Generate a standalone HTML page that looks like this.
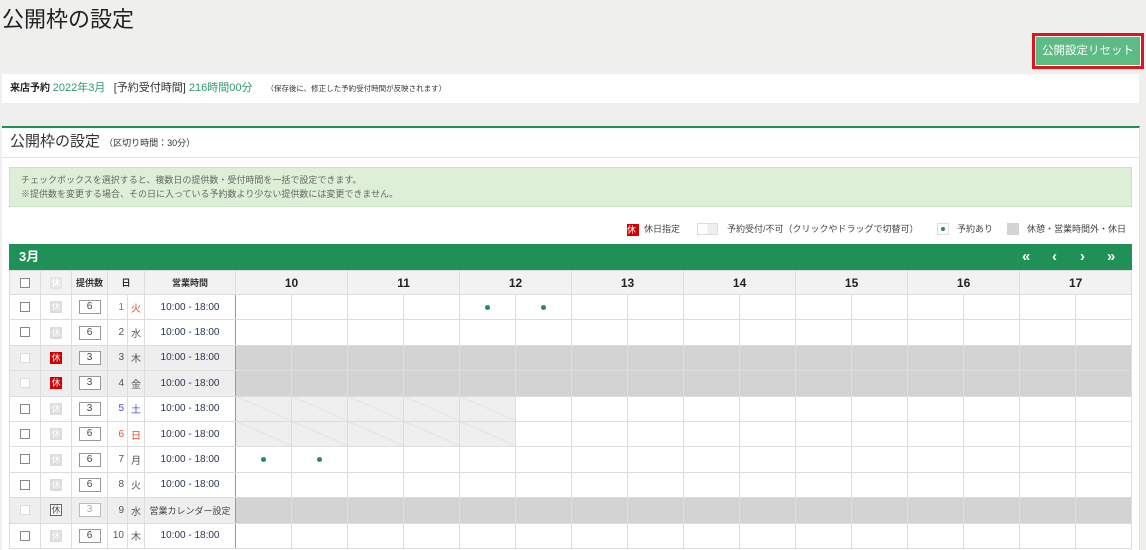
<!DOCTYPE html>
<html><head><meta charset="utf-8"><style>
*{box-sizing:border-box;margin:0;padding:0}
body{width:1146px;height:550px;overflow:hidden;background:#eff0ed;font-family:"Liberation Sans","Noto Sans CJK JP",sans-serif;color:#333;position:relative}
.abs{position:absolute}
h1{position:absolute;left:2px;top:2px;font-size:22px;font-weight:normal;color:#222}
.btn{left:1032px;top:33px;width:112px;height:36px;border:3px solid #e0141e;background:#fff}
.btn div{position:absolute;left:1px;top:1px;right:1px;bottom:1px;background:#5dbb84;color:#fff;font-size:11.5px;text-align:center;line-height:28px}
.info{left:2px;top:74px;width:1137px;height:29px;background:#fff;font-size:10px;line-height:29px;padding-left:8px;white-space:nowrap}
.g{color:#2e9a6b}
.panel{left:2px;top:126px;width:1138px;height:424px;background:#fff;border-top:2px solid #1f9157;border-right:1px solid #e4e4e4}
.ph{position:absolute;left:0;top:0;width:100%;height:30px;border-bottom:1px solid #e4e4e4;font-size:15px;line-height:27px;padding-left:8px}
.note{left:9px;top:167px;width:1123px;height:40px;background:#deefd8;border:1px solid #c9e4c0;font-size:9px;color:#666;line-height:14px;padding:5px 0 0 11px}
.leg{top:222px;font-size:9px;color:#444;line-height:14px}
.bar{left:9px;top:244px;width:1123px;height:26px;background:#1f9157;color:#fff;font-weight:bold;font-size:13px;line-height:26px;padding-left:10px}
.nav{position:absolute;top:0;color:#fff;font-size:15px;font-weight:bold}
table{position:absolute;left:9px;top:270px;border-collapse:collapse;table-layout:fixed;width:1123px;font-size:10px}
td,th{border:1px solid #ddd;height:25.4px;text-align:center;padding:0;overflow:hidden;white-space:nowrap}
th{background:#f2f2f2;height:24px;font-size:9px}
th.h{font-size:12px;color:#222}
.cb{display:inline-block;width:10px;height:10px;border:1px solid #888;background:#fff;vertical-align:middle}
.cbd{border-color:#ddd}
.k{display:inline-block;width:12px;height:12px;background:#ddd;color:#fff;font-size:9px;line-height:12px;vertical-align:middle}
.kr{background:#d40000}
.ko{background:#fff;border:1px solid #666;color:#555;line-height:10px}
.n{display:inline-block;width:22px;height:14px;border:1px solid #999;line-height:12px;font-size:10px;vertical-align:middle;background:#fff;color:#444}
.ng{color:#aaa;border-color:#bbb}
tr.x td.l{background:#eee}
td.t{border-right:1px solid #999}
td.b{border-left:1px solid #999}
tr.x td.s{background:#d3d3d3}
td.hz{background:#efefef;background-image:linear-gradient(to bottom left,transparent 49%,#ddd 50%,transparent 52%)}
.wd{color:#555}
.red{color:#e84a2a}.blu{color:#4a4ae0}
.dot{display:inline-block;width:5px;height:5px;border-radius:50%;background:#1f9157}
.tm{color:#2a3550}
</style></head><body>
<h1>公開枠の設定</h1>
<div class="abs btn"><div>公開設定リセット</div></div>
<div class="abs info"><b style="color:#222">来店予約</b> <span class="g" style="font-size:11px">2022年3月</span>&nbsp;&nbsp;&nbsp;<span style="font-size:11px">[予約受付時間] <span class="g">216時間00分</span></span>&nbsp;&nbsp;&nbsp;&nbsp;&nbsp;<span style="font-size:7.5px">（保存後に、修正した予約受付時間が反映されます）</span></div>
<div class="abs panel"><div class="ph">公開枠の設定 <span style="font-size:9px">（区切り時間：30分）</span></div></div>
<div class="abs note">チェックボックスを選択すると、複数日の提供数・受付時間を一括で設定できます。<br>※提供数を変更する場合、その日に入っている予約数より少ない提供数には変更できません。</div>
<div class="abs leg" style="left:627px"><span class="k kr">休</span>&nbsp; 休日指定</div>
<div class="abs" style="left:697px;top:223px;width:21px;height:12px;border:1px solid #ddd;background:linear-gradient(to right,#fff 50%,#eee 50%)"></div>
<div class="abs leg" style="left:727px">予約受付/不可（クリックやドラッグで切替可）</div>
<div class="abs" style="left:937px;top:223px;width:12px;height:12px;border:1px solid #ddd;background:#fff"><span class="dot abs" style="left:3px;top:3px;width:4px;height:4px"></span></div>
<div class="abs leg" style="left:957px">予約あり</div>
<div class="abs" style="left:1007px;top:223px;width:12px;height:12px;background:#d3d3d3"></div>
<div class="abs leg" style="left:1027px">休憩・営業時間外・休日</div>
<div class="abs bar">3月<span class="nav" style="left:1013px">«</span><span class="nav" style="left:1043px">‹</span><span class="nav" style="left:1071px">›</span><span class="nav" style="left:1098px">»</span></div>
<table>
<colgroup><col style="width:31px"><col style="width:31px"><col style="width:36px"><col style="width:20px"><col style="width:17px"><col style="width:91px"><col span="16" style="width:56px"></colgroup>
<tr><th><span class="cb"></span></th><th><span class="k" style="background:#e4e4e4">休</span></th><th>提供数</th><th colspan="2">日</th><th>営業時間</th><th class="h" colspan="2" style="border-left:1px solid #999">10</th><th class="h" colspan="2">11</th><th class="h" colspan="2">12</th><th class="h" colspan="2">13</th><th class="h" colspan="2">14</th><th class="h" colspan="2">15</th><th class="h" colspan="2">16</th><th class="h" colspan="2">17</th></tr>
<tbody id="tb"></tbody>
</table>
<script>
var rows=[
["",6,1,"火","red","",""],["",6,2,"水","wd","",""],["r",3,3,"木","wd","x",""],["r",3,4,"金","wd","x",""],
["",3,5,"土","blu","h",""],["",6,6,"日","red","h",""],["",6,7,"月","wd","",""],["",6,8,"火","wd","",""],
["o",3,9,"水","wd","x",""],["",6,10,"木","wd","",""]];
var h="";
rows.forEach(function(r,i){
 var x=r[5]=="x";
 h+='<tr class="'+(x?'x':'')+'">';
 h+='<td class="l"><span class="cb'+(x?' cbd':'')+'"></span></td>';
 h+='<td class="l"><span class="k'+(r[0]=="r"?" kr":r[0]=="o"?" ko":"")+'">休</span></td>';
 h+='<td class="l"><span class="n'+(r[0]=="o"?" ng":"")+'">'+r[1]+'</span></td>';
 h+='<td class="l '+r[4]+'" style="text-align:right;padding-right:3px">'+r[2]+'</td>';
 h+='<td class="l '+r[4]+'">'+r[3]+'</td>';
 h+='<td class="l t tm" style="'+(r[0]=="o"?'font-size:9px;color:#444':'')+'">'+(r[0]=="o"?"営業カレンダー設定":"10:00 - 18:00")+'</td>';
 for(var c=0;c<16;c++){
  var cls="s"+(c%2==0?" b":"");
  if(r[5]=="h"&&c<5)cls+=" hz";
  var d="";
  if(i==0&&(c==4||c==5))d='<span class="dot"></span>';
  if(i==6&&(c==0||c==1))d='<span class="dot"></span>';
  h+='<td class="'+cls+'">'+d+'</td>';
 }
 h+='</tr>';
});
document.getElementById("tb").innerHTML=h;
</script>
</body></html>
